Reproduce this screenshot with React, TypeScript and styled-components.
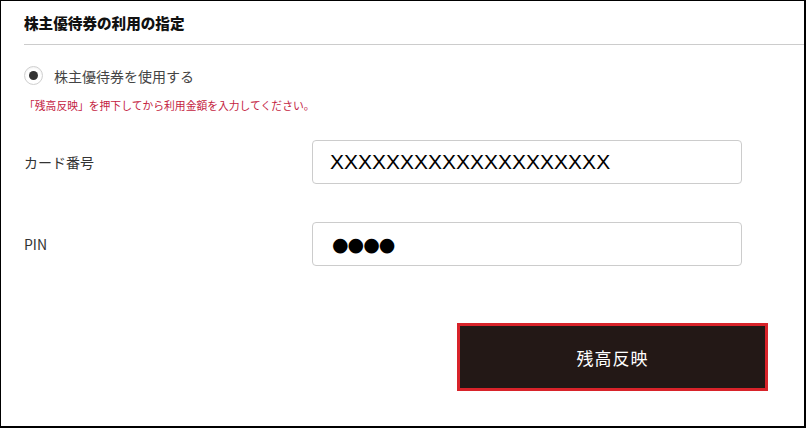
import React from "react";
import styled, { createGlobalStyle } from "styled-components";

const GlobalStyle = createGlobalStyle`
  html, body {
    margin: 0;
    padding: 0;
    background: #ffffff;
  }
  body {
    font-family: "Noto Sans CJK JP", "Noto Sans", sans-serif;
    color: #333333;
  }
`;

const Page = styled.div`
  width: 807px;
  height: 428px;
  background: #ffffff;
`;

const Frame = styled.section`
  box-sizing: border-box;
  width: 806px;
  height: 428px;
  border-left: 1px solid #000;
  border-top: 1px solid #000;
  border-right: 2px solid #000;
  border-bottom: 2px solid #000;
  padding-left: 23px;
  display: flex;
  flex-direction: column;
`;

const Header = styled.h2`
  margin: 0;
  height: 44px;
  box-sizing: border-box;
  border-bottom: 1px solid #cccccc;
  display: flex;
  align-items: center;
  font-size: 14.6px;
  font-weight: 900;
  color: #111111;
  letter-spacing: 0;
  padding-bottom: 1px;
`;

const Content = styled.div`
  display: flex;
  flex-direction: column;
  padding-right: 36px;
`;

const RadioRow = styled.label`
  display: flex;
  align-items: center;
  gap: 11px;
  margin-top: 21px;
  height: 19px;
  font-size: 14px;
  color: #444444;
`;

const RadioCircle = styled.span`
  box-sizing: border-box;
  width: 19px;
  height: 19px;
  border-radius: 50%;
  border: 1px solid #cfcfcf;
  background: #ffffff;
  display: flex;
  align-items: center;
  justify-content: center;
  box-shadow: inset 0 1px 2px rgba(0, 0, 0, 0.06);

  &::after {
    content: "";
    width: 9px;
    height: 9px;
    border-radius: 50%;
    background: #333333;
  }
`;

const Note = styled.p`
  margin: 12px 0 0 0;
  font-size: 10.8px;
  line-height: 16px;
  color: #c4233f;
`;

const FieldRow = styled.div<{ $top: number }>`
  display: grid;
  grid-template-columns: 288px 430px;
  align-items: center;
  margin-top: ${(p) => p.$top}px;
`;

const FieldLabel = styled.span`
  font-size: 14px;
  color: #333333;
`;

const FieldBox = styled.div`
  box-sizing: border-box;
  height: 44px;
  border: 1px solid #cccccc;
  border-radius: 4px;
  background: #ffffff;
  display: flex;
  align-items: center;
  padding-left: 17px;
  font-family: "Liberation Sans", Arial, sans-serif;
  font-size: 21px;
  color: #000000;
`;

const Dots = styled.span`
  font-family: "DejaVu Sans", sans-serif;
  font-size: 19px;
  letter-spacing: -1px;
  padding-left: 2px;
`;

const ButtonRow = styled.div`
  display: flex;
  justify-content: flex-end;
  margin-top: 57px;
`;

const ReflectButton = styled.button`
  box-sizing: border-box;
  width: 311px;
  height: 68px;
  border: 3px solid #d8232a;
  background: #231816;
  color: #ffffff;
  font-family: "Noto Sans CJK JP", sans-serif;
  font-size: 17px;
  letter-spacing: 1px;
  cursor: pointer;
  padding: 0;
`;

export default function App() {
  return (
    <>
      <GlobalStyle />
      <Page>
        <Frame>
          <Header>株主優待券の利用の指定</Header>
          <Content>
            <RadioRow>
              <RadioCircle />
              株主優待券を使用する
            </RadioRow>
            <Note>「残高反映」を押下してから利用金額を入力してください。</Note>
            <FieldRow $top={27}>
              <FieldLabel>カード番号</FieldLabel>
              <FieldBox>XXXXXXXXXXXXXXXXXXXX</FieldBox>
            </FieldRow>
            <FieldRow $top={38}>
              <FieldLabel>PIN</FieldLabel>
              <FieldBox>
                <Dots>●●●●</Dots>
              </FieldBox>
            </FieldRow>
            <ButtonRow>
              <ReflectButton>残高反映</ReflectButton>
            </ButtonRow>
          </Content>
        </Frame>
      </Page>
    </>
  );
}
